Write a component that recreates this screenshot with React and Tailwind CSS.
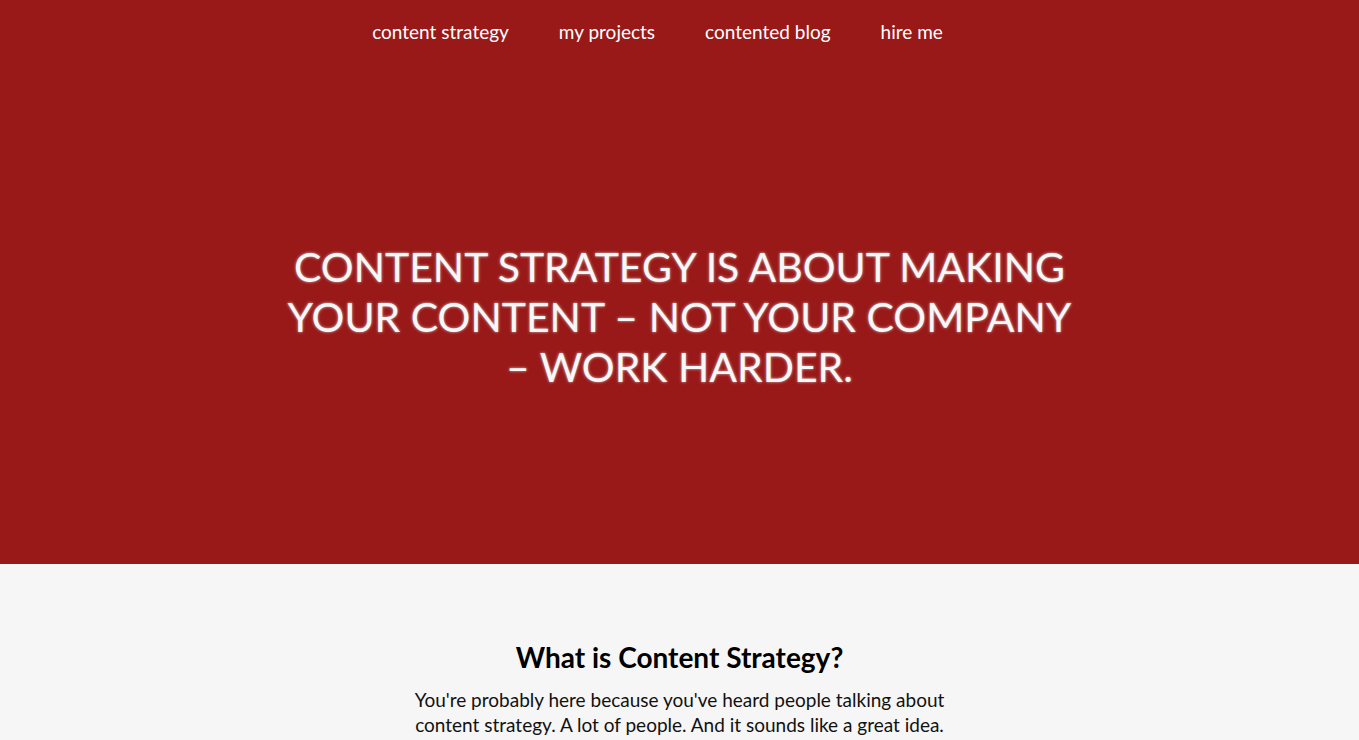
import React from 'react';

const links = ['content strategy', 'my projects', 'contented blog', 'hire me'];

const App = () => {
  return (
    <div className="min-h-screen bg-[#f6f6f6] font-['Lato','Open_Sans',sans-serif]">
      <header className="bg-[#991919] h-[564px] flex flex-col">
        <nav className="flex justify-center gap-[50px] pt-[20px] pr-[44px]">
          {links.map((link) => (
            <a key={link} href="#" className="text-white text-[19px] leading-[24px]">
              {link}
            </a>
          ))}
        </nav>
        <div className="flex-1 flex items-center justify-center pt-[26px]">
          <h1 className="text-center text-[#f7f7f7] uppercase text-[41px] leading-[50px] max-w-[805px] [text-shadow:0_0_3px_rgba(255,255,255,0.75),0_0_1px_rgba(60,0,0,0.6)]">
            Content strategy is about making your content – not your company – work harder.
          </h1>
        </div>
      </header>
      <section className="flex flex-col items-center pt-[76px]">
        <h2 className="text-[28px] leading-[34px] font-bold text-black">What is Content Strategy?</h2>
        <p className="mt-[13px] w-[560px] text-center text-[19px] leading-[25px] text-[#111]">
          You're probably here because you've heard people talking about content strategy. A lot of people. And it sounds like a great idea.
        </p>
      </section>
    </div>
  );
};

export default App;
